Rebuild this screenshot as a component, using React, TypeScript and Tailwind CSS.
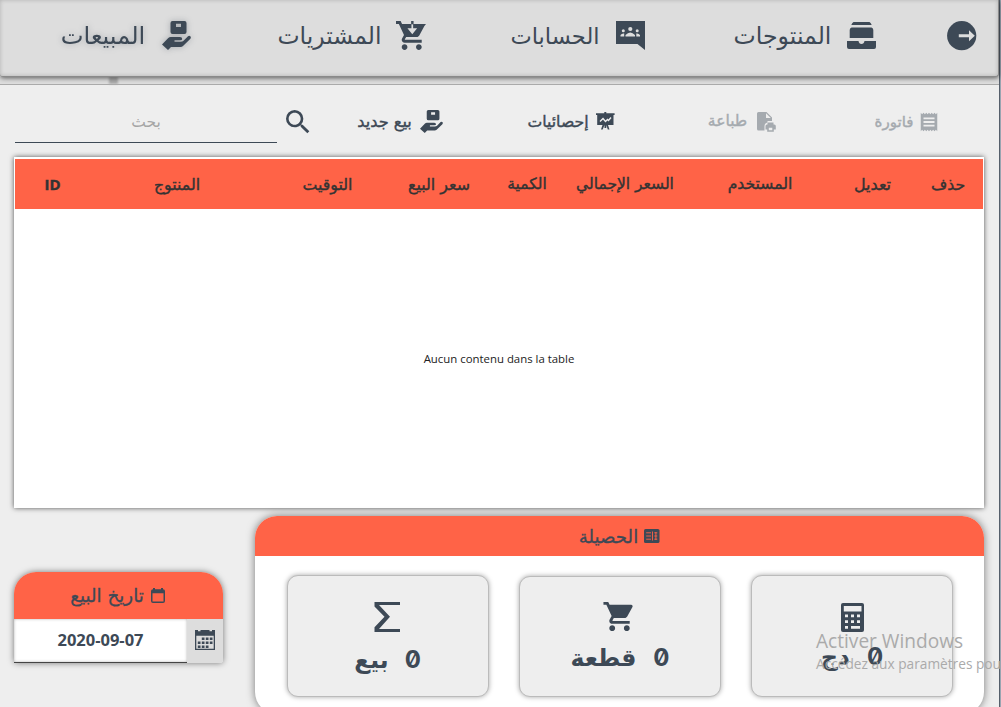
import type { ReactNode } from "react";
import { MdSearch, MdReceipt, MdShoppingCart } from "react-icons/md";

const arabic = "font-['DejaVu_Sans','Noto_Sans',sans-serif]";

function HandBox({ className }: { className: string }) {
  return (
    <svg viewBox="0 0 29 29" className={className} fill="currentColor">
      <path fillRule="evenodd" d="M10.5 0H22.5Q24.5 0 24.5 2V11Q24.5 13 22.5 13H10.5Q8.5 13 8.5 11V2Q8.5 0 10.5 0ZM14 2.7V6H19V2.7Z" />
      <path d="M0 23.5L6.3 17Q7.3 16 8.7 16H18Q20.2 16 20.2 18Q20.2 19.3 18 19.3H12.5V20.8H18.5Q20.6 20.8 21.5 19.8L26 15.2Q27.5 14.2 28.5 15.4Q29.3 16.8 28.2 18L21 25Q20 26 18.5 26H9L6 29Z" />
    </svg>
  );
}

function CartDown() {
  return (
    <svg viewBox="1 2 21 20" className="h-[29px] w-[30px]" preserveAspectRatio="none" fill="currentColor">
      <path d="M7 18c-1.1 0-1.99.9-1.99 2S5.9 22 7 22s2-.9 2-2-.9-2-2-2zM1 2v2h2l3.6 7.59-1.35 2.45c-.16.28-.25.61-.25.96 0 1.1.9 2 2 2h12v-2H7.42c-.14 0-.25-.11-.25-.25l.03-.12.9-1.63h7.45c.75 0 1.41-.41 1.75-1.03l3.58-6.49L22 4H5.21l-.94-2H1zm16 16c-1.1 0-1.99.9-1.99 2s.89 2 1.99 2 2-.9 2-2-.9-2-2-2z" />
      <path d="M11.8 2.2h1.2V7h2.8l-3.4 4.2L9 7h2.8z" fill="#ddd" />
      <path d="M11.6 2h1.7v2.3h-1.7z" />
    </svg>
  );
}

function GroupChat() {
  return (
    <svg viewBox="0 0 29 29" className="h-[29px] w-[29px]" fill="currentColor">
      <path d="M0 0H29V29L21.5 23H0Z" />
      <g fill="#ddd">
        <circle cx="14.3" cy="8" r="2.1" />
        <circle cx="7.3" cy="9.8" r="1.5" />
        <circle cx="21.2" cy="9.8" r="1.5" />
        <path d="M9.5 15.5V14Q14.3 9 19 14V15.5ZM4.5 15.5V14Q6 12 8.2 12.5V15.5ZM20.3 15.5V12.5Q22.5 12 24 14V15.5Z" />
      </g>
    </svg>
  );
}

function Archive() {
  return (
    <svg viewBox="0 0 29 27" className="h-[27px] w-[29px]" fill="currentColor">
      <path d="M6.5 0H22.5Q24 1 24.7 3H4.3Q5 1 6.5 0Z" />
      <path d="M4.5 5.5H24.5Q26.3 6 26.3 8V16H2.7V8Q2.7 6 4.5 5.5Z" />
      <path d="M0 19H11.5Q12 22 14.5 22Q17 22 17.5 19H29V25Q29 27 27 27H2Q0 27 0 25Z" />
    </svg>
  );
}

function Exit() {
  return (
    <svg viewBox="0 0 30 30" className="h-[30px] w-[30px]">
      <circle cx="14.7" cy="14.7" r="14.6" fill="currentColor" />
      <path d="M11.8 13.2H22V9.2L27.8 14.7L22 20.2V16.2H11.8Z" fill="#ddd" />
    </svg>
  );
}

function Board() {
  return (
    <svg viewBox="0 0 19 18" className="h-[18px] w-[19px]" fill="currentColor">
      <path d="M0 1.2H8.3V0H10.3V1.2H18.6V3H17.5V13H12L13.5 17.5H11.8L10.3 13V16H8.5V13L6.7 17.5H5L6.5 13H1.2V3H0Z" />
      <path d="M4 9.5L7 6.5L9.5 9.5L11.5 7.5L12.5 8.5L15 5.5" fill="none" stroke="#eee" strokeWidth="1.4" />
    </svg>
  );
}

function PrintDoc() {
  return (
    <svg viewBox="0 0 19 20" className="h-[20px] w-[19px]" fill="currentColor">
      <path d="M1.5 0H9.5L15 5.5V9H10.5V10.5Q7.5 11 7.5 14V18.5H1.5Q0 18.5 0 17V1.5Q0 0 1.5 0Z" />
      <path d="M9 1.2V6H13.8Z" fill="#eee" />
      <path fillRule="evenodd" d="M10.5 10.5H16.5V12.5H17.3Q18.8 12.5 18.8 14V17.5H16.8V19.8H10.2V17.5H8.5V14Q8.5 12.5 10 12.5H10.5ZM11.8 15.8V18.3H15.3V15.8Z" />
    </svg>
  );
}

function SmallCalendar() {
  return (
    <svg viewBox="0 0 14 15" className="h-[15px] w-[14px]" fill="currentColor">
      <path fillRule="evenodd" d="M2 0H4V1.3H10V0H12V1.3Q14 1.3 14 3V13Q14 15 12 15H2Q0 15 0 13V3Q0 1.3 2 1.3ZM1.5 5.2V13.4H12.5V5.2Z" />
    </svg>
  );
}

function NewsBox() {
  return (
    <svg viewBox="0 0 16 14" className="h-[14px] w-[16px]">
      <rect width="15.5" height="14" rx="1.6" fill="currentColor" />
      <path d="M2.2 3.8H7M2.2 7H7M2.2 10.2H7M8.5 2.5V11.5M10.3 3.8H13.3M10.3 7H13.3M10.3 10.2H13.3M11.9 3V11" stroke="#ff6347" strokeWidth=".9" />
    </svg>
  );
}

function MonthGrid() {
  const dots = [[7, 8], [11, 8], [15, 8], [3, 12], [7, 12], [11, 12], [15, 12], [3, 16], [7, 16], [11, 16]];
  return (
    <svg viewBox="0 0 20 20" className="h-[20px] w-[20px]" fill="currentColor">
      <path fillRule="evenodd" d="M0 0H3V1.3H5.5V0H14.5V1.3H17V0H20V20H0ZM1.3 5.8V18.7H18.7V5.8Z" />
      {dots.map(([x, y]) => (
        <rect key={x + "-" + y} x={x - 0.2} y={y - 0.5} width="2.7" height="2.5" />
      ))}
    </svg>
  );
}

function Sigma() {
  return (
    <svg viewBox="0 0 26 30" className="-ml-[2px] h-[30px] w-[26px]" fill="currentColor">
      <path d="M.5 0H26V3H5L16 14.8L5 27H26V30H.5V25.2L10.5 14.8L.5 4.5Z" />
    </svg>
  );
}

function Calculator() {
  return (
    <svg viewBox="0 0 23 29" className="h-[29px] w-[23px]">
      <rect width="23" height="29" rx="2" fill="currentColor" />
      <g fill="#eee">
        <path d="M2.8 3H20.5V8.5H2.8Z" />
        <path d="M4 11.5H7V14.3H4ZM10 11.5H13V14.3H10ZM16 11.5H19V14.3H16ZM4 17.2H7V20H4ZM10 17.2H13V20H10ZM16 17.2H19V20H16ZM4 23H7V25.8H4ZM10 23H19V25.8H10Z" />
      </g>
    </svg>
  );
}

function NavItem({ label, labelClass, children }: { label: string; labelClass: string; children: ReactNode }) {
  return (
    <div className="flex items-center">
      <span className={`flex shrink-0 justify-center whitespace-nowrap leading-8 ${labelClass}`}>
        <span dir="rtl">{label}</span>
      </span>
      {children}
    </div>
  );
}

const columns = [
  { label: "ID", cell: "w-[75px] font-['Open_Sans'] font-bold text-[15px]" },
  { label: "المنتوج", cell: "w-[174px] pt-[2px] text-[15.8px]" },
  { label: "التوقيت", cell: "w-[127px] pt-[2px] text-[15.8px]" },
  { label: "سعر البيع", cell: "w-[96px] pt-px text-[15.9px]" },
  { label: "الكمية", cell: "w-[80px] pt-[2px] text-[15.5px]" },
  { label: "السعر الإجمالي", cell: "w-[116px] pt-[2px] text-[15.5px]" },
  { label: "المستخدم", cell: "w-[154px] pt-[2px] text-[15.6px]" },
  { label: "تعديل", cell: "w-[71px] pt-px text-[16px]" },
  { label: "حذف", cell: "w-[75px] pt-px pl-[5px] text-[15.7px]" },
];

function Stat({ icon, unit, className, valueClass }: { icon: ReactNode; unit: string; className: string; valueClass: string }) {
  return (
    <div className={`flex w-[202px] shrink-0 flex-col items-center rounded-[11px] border border-[#bbb] bg-[#eee] shadow-[0_0_5px_rgba(0,0,0,0.35)] ${className}`}>
      {icon}
      <div dir="rtl" className={`flex items-center whitespace-nowrap leading-[30px] font-bold ${valueClass}`}>
        <span className="pt-px font-['Inter'] text-[24px] [font-feature-settings:'zero']">0</span>
        <span>{unit}</span>
      </div>
    </div>
  );
}

export default function App() {
  return (
    <div className={`relative flex h-[707px] w-[1001px] overflow-hidden bg-[#eee] text-[#3d4956] ${arabic}`}>
      <div className="flex w-[999px] shrink-0 flex-col">
        <header className="relative z-10 flex h-[77px] w-[999px] shrink-0 items-start rounded-b-[3px] border-r border-b border-[#8a8a8a] bg-[#ddd] pt-[20px] shadow-[0_1px_5px_rgba(0,0,0,0.6),inset_0_0_4px_rgba(0,0,0,0.2)]">
          <div className="ml-[61px] flex h-8 w-[130px] items-center drop-shadow-[0_0_3px_rgba(61,73,86,0.35)]">
            <NavItem label="المبيعات" labelClass="w-[84px] mr-[17px] text-[24.2px]"><HandBox className="-mt-[2px] h-[29px] w-[29px]" /></NavItem>
          </div>
          <div className="ml-[87px] flex h-8 w-[148px] items-center">
            <NavItem label="المشتريات" labelClass="w-[103px] mr-[15px] text-[23.5px]"><span className="-mt-px"><CartDown /></span></NavItem>
          </div>
          <div className="ml-[85px] flex h-8 w-[135px] items-center">
            <NavItem label="الحسابات" labelClass="w-[88px] mr-[17px] text-[22.6px]"><span className="-mt-[2px]"><GroupChat /></span></NavItem>
          </div>
          <div className="ml-[88px] flex h-8 w-[143px] items-center">
            <NavItem label="المنتوجات" labelClass="w-[97px] mr-[16px] text-[23.6px]"><span className="-mt-[2px]"><Archive /></span></NavItem>
          </div>
          <div className="ml-[70px] flex h-8 items-center"><Exit /></div>
        </header>
        <div className="flex h-[8px] shrink-0 border-b border-[#aaa] bg-[#ddd]">
          <div className="ml-[109px] h-[7px] w-[9px] bg-[#aaa] blur-[1px]" />
        </div>

        <div className="flex h-[72px] shrink-0 items-start pt-[20px] text-[15px]">
          <div className="ml-[15px] flex h-[38px] w-[262px] items-center justify-center border-b border-[#3d4956] pb-[2px] text-[15.5px] text-[#a5a5a5]">
            <span dir="rtl">بحث</span>
          </div>
          <MdSearch className="mt-px ml-[5px] h-[32px] w-[32px]" />
          <div className="ml-[43px] flex h-8 w-[86px] items-center justify-between pt-px whitespace-nowrap [-webkit-text-stroke:0.4px_currentColor]">
            <span className="flex w-[55px] justify-center pt-px text-[16.2px]" dir="rtl">بيع جديد</span>
            <HandBox className="h-[23px] w-[23px]" />
          </div>
          <div className="ml-[84px] flex h-8 w-[88px] items-center justify-between pt-px whitespace-nowrap [-webkit-text-stroke:0.4px_currentColor]">
            <span className="flex w-[62px] justify-center text-[15.7px]" dir="rtl">إحصائيات</span>
            <span className="-mt-px"><Board /></span>
          </div>
          <div className="ml-[93px] flex h-8 w-[68px] items-center justify-between pt-px whitespace-nowrap text-[#a5aaaf] [-webkit-text-stroke:0.4px_currentColor]">
            <span className="flex w-[39px] justify-center pt-px text-[15.5px]" dir="rtl">طباعة</span>
            <PrintDoc />
          </div>
          <div className="ml-[99px] flex h-8 w-[64px] items-center justify-between pt-px whitespace-nowrap text-[#a5aaaf] [-webkit-text-stroke:0.4px_currentColor]">
            <span className="flex w-[38px] justify-center pt-px" dir="rtl">فاتورة</span>
            <MdReceipt className="-mr-px h-[22px] w-[22px]" />
          </div>
        </div>

        <div className="ml-[14px] flex h-[351px] w-[970px] shrink-0 flex-col border border-white bg-white pt-px shadow-[0_0_5px_rgba(0,0,0,0.65)]">
          <div className="flex h-[50px] w-[968px] shrink-0 items-center bg-[#ff6347] text-[#333]">
            {columns.map((c) => (
              <div key={c.label} className={`flex shrink-0 justify-center whitespace-nowrap [-webkit-text-stroke:0.4px_currentColor] ${c.cell}`}>
                <span dir="auto">{c.label}</span>
              </div>
            ))}
          </div>
          <div className="flex flex-1 items-center justify-center pt-[2px] font-['Open_Sans',sans-serif] text-[11.4px] text-[#222]">
            Aucun contenu dans la table
          </div>
        </div>

        <div className="flex h-[199px] shrink-0 items-start">
          <div className="mt-[64px] ml-[14px] flex h-[91px] w-[209px] flex-col rounded-t-[22px] rounded-b-[3px] shadow-[0_0_6px_rgba(0,0,0,0.5)]">
            <div className="flex h-[47px] items-center justify-center gap-[7px] rounded-t-[22px] bg-[#ff6347] pt-px pr-[2px] text-[18.3px]">
              <span className="whitespace-nowrap [-webkit-text-stroke:0.3px_currentColor]" dir="rtl">تاريخ البيع</span>
              <span className="-mt-[2px]"><SmallCalendar /></span>
            </div>
            <div className="flex h-[44px]">
              <div className="flex w-[173px] items-center justify-center border-b border-[#444] bg-white font-['Open_Sans',sans-serif] text-[16.5px] font-bold shadow-[inset_0_0_3px_rgba(0,0,0,0.3)]">
                2020-09-07
              </div>
              <div className="flex flex-1 items-center justify-center rounded-br-[3px] bg-[#ddd] pb-[2px]"><MonthGrid /></div>
            </div>
          </div>
          <div className="mt-[8px] ml-[32px] flex h-[198px] w-[729px] flex-col rounded-[22px] bg-white shadow-[0_0_8px_rgba(0,0,0,0.5)]">
            <div className="flex h-[40px] shrink-0 items-center justify-center gap-[6px] rounded-t-[22px] bg-[#ff6347] text-[18.2px]">
              <span className="pt-px whitespace-nowrap [-webkit-text-stroke:0.3px_currentColor]" dir="rtl">الحصيلة</span>
              <NewsBox />
            </div>
            <div className="flex items-end pt-[19px] pl-[32px]">
              <Stat className="h-[122px] pt-[26px]" valueClass="mt-[12px] gap-[16px] pr-px text-[23.5px]" icon={<Sigma />} unit="بيع" />
              <Stat className="ml-[30px] h-[121px] pt-[22px]" valueClass="mt-[8px] gap-[17px] text-[23.5px]" icon={<MdShoppingCart className="-ml-px h-[35px] w-[35px]" />} unit="قطعة" />
              <Stat className="ml-[30px] h-[122px] pt-[27px]" valueClass="mt-[9px] gap-[17px] text-[23.5px]" icon={<Calculator />} unit="دج" />
            </div>
          </div>
        </div>
      </div>
      <div className="w-[2px] shrink-0 border-l border-[#555f6b] bg-[#9aa5b1]" />
      <div className="absolute top-[629px] left-[816px] z-20 font-['Open_Sans',sans-serif] whitespace-nowrap text-[#aaa]">
        <div className="text-[19.1px] leading-[25px]">Activer Windows</div>
        <div className="text-[13.7px] leading-[19px]">Accédez aux paramètres pour activer Windows.</div>
      </div>
    </div>
  );
}
